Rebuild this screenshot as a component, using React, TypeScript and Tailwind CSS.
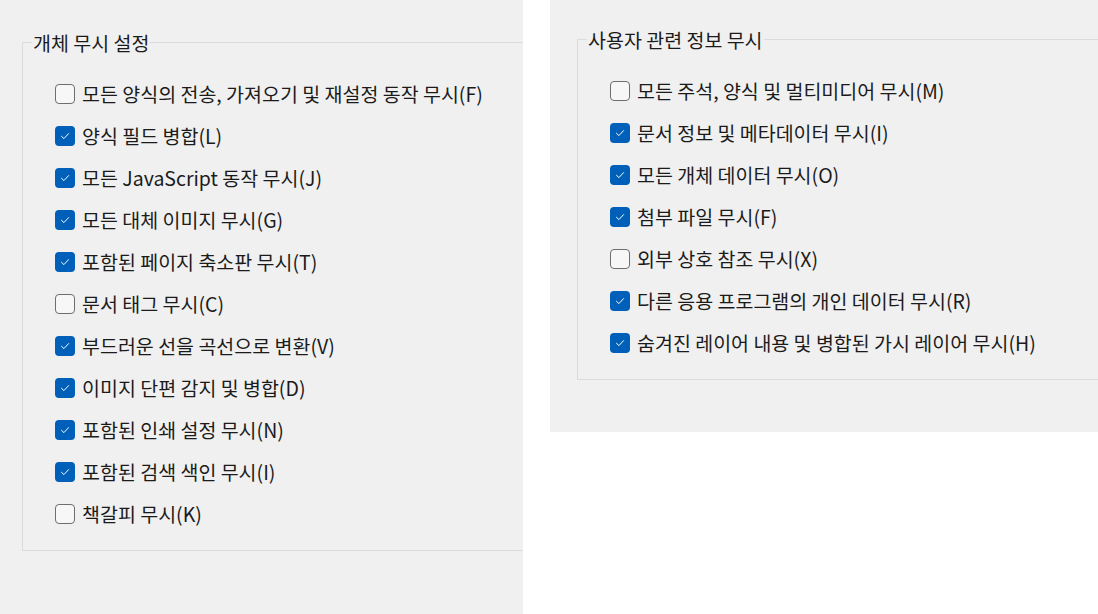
import React from "react";

type Item = { label: string; checked: boolean };

const left: Item[] = [
  { label: "모든 양식의 전송, 가져오기 및 재설정 동작 무시(F)", checked: false },
  { label: "양식 필드 병합(L)", checked: true },
  { label: "모든 JavaScript 동작 무시(J)", checked: true },
  { label: "모든 대체 이미지 무시(G)", checked: true },
  { label: "포함된 페이지 축소판 무시(T)", checked: true },
  { label: "문서 태그 무시(C)", checked: false },
  { label: "부드러운 선을 곡선으로 변환(V)", checked: true },
  { label: "이미지 단편 감지 및 병합(D)", checked: true },
  { label: "포함된 인쇄 설정 무시(N)", checked: true },
  { label: "포함된 검색 색인 무시(I)", checked: true },
  { label: "책갈피 무시(K)", checked: false },
];

const right: Item[] = [
  { label: "모든 주석, 양식 및 멀티미디어 무시(M)", checked: false },
  { label: "문서 정보 및 메타데이터 무시(I)", checked: true },
  { label: "모든 개체 데이터 무시(O)", checked: true },
  { label: "첨부 파일 무시(F)", checked: true },
  { label: "외부 상호 참조 무시(X)", checked: false },
  { label: "다른 응용 프로그램의 개인 데이터 무시(R)", checked: true },
  { label: "숨겨진 레이어 내용 및 병합된 가시 레이어 무시(H)", checked: true },
];

function Box({ checked }: { checked: boolean }) {
  if (checked) {
    return (
      <span className="flex h-[20px] w-[20px] shrink-0 items-center justify-center rounded-[4px] bg-[#005fb8]">
        <svg width="10" height="8" viewBox="0 0 10 8" fill="none">
          <path d="M1.5 4.3 L3.9 6.6 L8.6 1.6" stroke="white" strokeWidth="1" strokeLinecap="round" strokeLinejoin="round" />
        </svg>
      </span>
    );
  }
  return <span className="h-[20px] w-[20px] shrink-0 rounded-[4px] border border-[#6e6e6e] bg-[#f7f7f7]" />;
}

function Row({ item }: { item: Item }) {
  return (
    <div className="flex h-[42px] items-center gap-[7px]">
      <Box checked={item.checked} />
      <span className="whitespace-nowrap text-[19.5px] leading-none text-[#1b1b1b]">{item.label}</span>
    </div>
  );
}

function Group({ title, items }: { title: string; items: Item[] }) {
  return (
    <fieldset className="w-[540px] border border-[#dcdcdc]">
      <legend className="ml-[9px] px-px text-[19.5px] leading-none text-[#1b1b1b]">{title}</legend>
      <div className="flex flex-col pl-[32px] pt-[20px] pb-[15px]">
        {items.map((it) => (
          <Row key={it.label} item={it} />
        ))}
      </div>
    </fieldset>
  );
}

export default function App() {
  const font = { fontFamily: '"Noto Sans CJK KR", "Noto Sans", sans-serif' };
  return (
    <div className="flex h-[614px] w-[1098px] items-start bg-white" style={font}>
      <div className="h-[614px] w-[523px] shrink-0 overflow-hidden bg-[#f0f0f0] pl-[22px] pt-[33px]">
        <Group title="개체 무시 설정" items={left} />
      </div>
      <div className="ml-[27px] h-[432px] w-[548px] shrink-0 overflow-hidden bg-[#f0f0f0] pl-[27px] pt-[30px]">
        <Group title="사용자 관련 정보 무시" items={right} />
      </div>
    </div>
  );
}
